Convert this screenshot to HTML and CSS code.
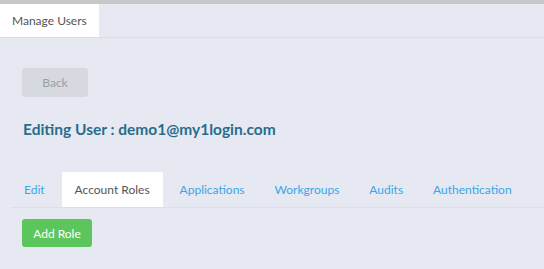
FILE: index.html
```html
<!DOCTYPE html>
<html lang="en">
    <head>
        <title>Manage Users</title>
        <meta charset="utf-8" />
        <link rel="stylesheet" href="styles.css">
    </head>
    <body>
        <div id="topbar"></div>
        <div id="pagetabs">
            <a class="pagetab active" href="#">Manage Users</a>
        </div>
        <div id="main">
            <button id="back" type="button">Back</button>
            <h2 id="title">Editing User : demo1@my1login.com</h2>
            <div id="tabs">
                <a class="tab" href="#">Edit</a>
                <a class="tab active" href="#">Account Roles</a>
                <a class="tab" href="#">Applications</a>
                <a class="tab" href="#">Workgroups</a>
                <a class="tab" href="#">Audits</a>
                <a class="tab" href="#">Authentication</a>
            </div>
            <button id="addrole" type="button">Add Role</button>
        </div>
    </body>
</html>
```
FILE: styles.css
```css
html, body {
    margin: 0px;
    padding: 0px;
    background: #e6e9f1;
    font-family: Lato, sans-serif;
}
#topbar {
    height: 4px;
    background: #c6c7c9;
}
#pagetabs {
    display: flex;
    height: 33px;
    border-bottom: 1px solid #dbdee6;
}
.pagetab {
    display: block;
    width: 99px;
    padding-left: 12px;
    box-sizing: border-box;
    line-height: 33px;
    color: #555;
    text-decoration: none;
    font-size: 12px;
}
.pagetab.active {
    background: white;
}
#main {
    padding: 30px 0px 0px 11px;
}
button {
    display: block;
    border: none;
    border-radius: 3px;
    font-family: Lato, sans-serif;
    font-size: 12px;
    cursor: pointer;
}
#back {
    margin-left: 11px;
    width: 66px;
    height: 29px;
    background: #d6d9df;
    color: #999da5;
}
#title {
    margin: 21px 0px 0px 12px;
    font-size: 15.5px;
    line-height: 22px;
    color: #2a6c8c;
}
#tabs {
    display: flex;
    gap: 4px;
    margin-top: 32px;
    border-bottom: 1px solid #dcdfe6;
}
.tab {
    display: block;
    padding: 0px 13px;
    line-height: 35px;
    color: #3aa5ea;
    text-decoration: none;
    font-size: 12px;
}
.tab.active {
    background: white;
    color: #555;
}
#addrole {
    margin: 11px 0px 0px 11px;
    width: 70px;
    height: 28px;
    background: #5cc65c;
    color: white;
}
```
